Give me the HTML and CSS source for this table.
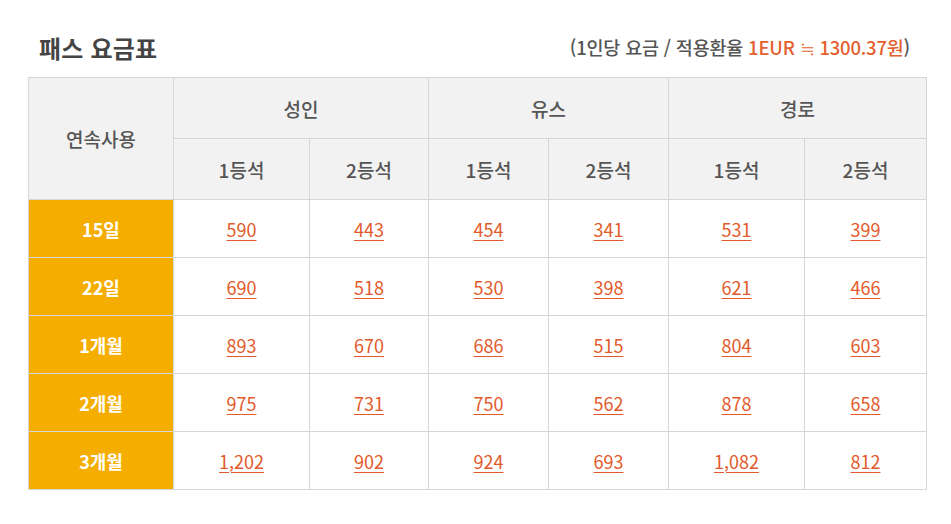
FILE: index.html
```html
<!DOCTYPE html>
<html lang="ko">
<head>
<meta charset="utf-8">
<link rel="stylesheet" href="styles.css">
</head>
<body>
<div class="wrap">
  <div class="head">
    <h2 class="title">패스 요금표</h2>
    <p class="note">(1인당 요금 / 적용환율 <span class="hl">1EUR ≒ 1300.37원</span>)</p>
  </div>
  <table class="fare">
    <colgroup>
      <col style="width:145px"><col style="width:136px"><col style="width:119px"><col style="width:120px"><col style="width:120px"><col style="width:136px"><col style="width:122px">
    </colgroup>
    <thead>
      <tr class="h1">
        <th rowspan="2">연속사용</th>
        <th colspan="2">성인</th>
        <th colspan="2">유스</th>
        <th colspan="2">경로</th>
      </tr>
      <tr class="h2">
        <th>1등석</th><th>2등석</th><th>1등석</th><th>2등석</th><th>1등석</th><th>2등석</th>
      </tr>
    </thead>
    <tbody>
      <tr><th>15일</th><td><a>590</a></td><td><a>443</a></td><td><a>454</a></td><td><a>341</a></td><td><a>531</a></td><td><a>399</a></td></tr>
      <tr><th>22일</th><td><a>690</a></td><td><a>518</a></td><td><a>530</a></td><td><a>398</a></td><td><a>621</a></td><td><a>466</a></td></tr>
      <tr><th>1개월</th><td><a>893</a></td><td><a>670</a></td><td><a>686</a></td><td><a>515</a></td><td><a>804</a></td><td><a>603</a></td></tr>
      <tr><th>2개월</th><td><a>975</a></td><td><a>731</a></td><td><a>750</a></td><td><a>562</a></td><td><a>878</a></td><td><a>658</a></td></tr>
      <tr><th>3개월</th><td><a>1,202</a></td><td><a>902</a></td><td><a>924</a></td><td><a>693</a></td><td><a>1,082</a></td><td><a>812</a></td></tr>
    </tbody>
  </table>
</div>
</body>
</html>
```
FILE: styles.css
```css
html, body {
  margin: 0;
  padding: 0;
  background: #fff;
}
body {
  font-family: "Noto Sans CJK KR", "Noto Sans", sans-serif;
  color: #555;
}
.wrap {
  width: 898px;
  padding: 29px 0 0 28px;
}
.head {
  display: flex;
  justify-content: space-between;
  align-items: center;
  padding: 0 16px 0 11px;
  height: 36px;
  margin-bottom: 12px;
}
.title {
  margin: 0;
  font-size: 24px;
  font-weight: 700;
  color: #444;
  letter-spacing: 0.2px;
}
.note {
  margin: 0;
  font-size: 18.5px;
  font-weight: 500;
  color: #555;
  letter-spacing: -0.2px;
}
.hl {
  color: #e4602e;
}
.fare {
  width: 898px;
  border-collapse: collapse;
  table-layout: fixed;
  font-size: 18px;
}
.fare th, .fare td {
  border: 1px solid #d6d6d6;
  text-align: center;
  padding: 0;
  font-weight: 400;
}
.fare thead th {
  background: #f2f2f2;
  color: #555;
  font-size: 19px;
  font-weight: 500;
}
.fare .h1 th { height: 60px; }
.fare .h2 th { height: 60px; }
.fare tbody th {
  background: #f5ae00;
  color: #fff;
  font-weight: 700;
  font-size: 18px;
}
.fare tbody tr { height: 58px; }
.fare td a {
  color: #e25a2b;
  text-decoration: underline;
  text-decoration-thickness: 1px;
  text-underline-offset: 3px;
}
```
